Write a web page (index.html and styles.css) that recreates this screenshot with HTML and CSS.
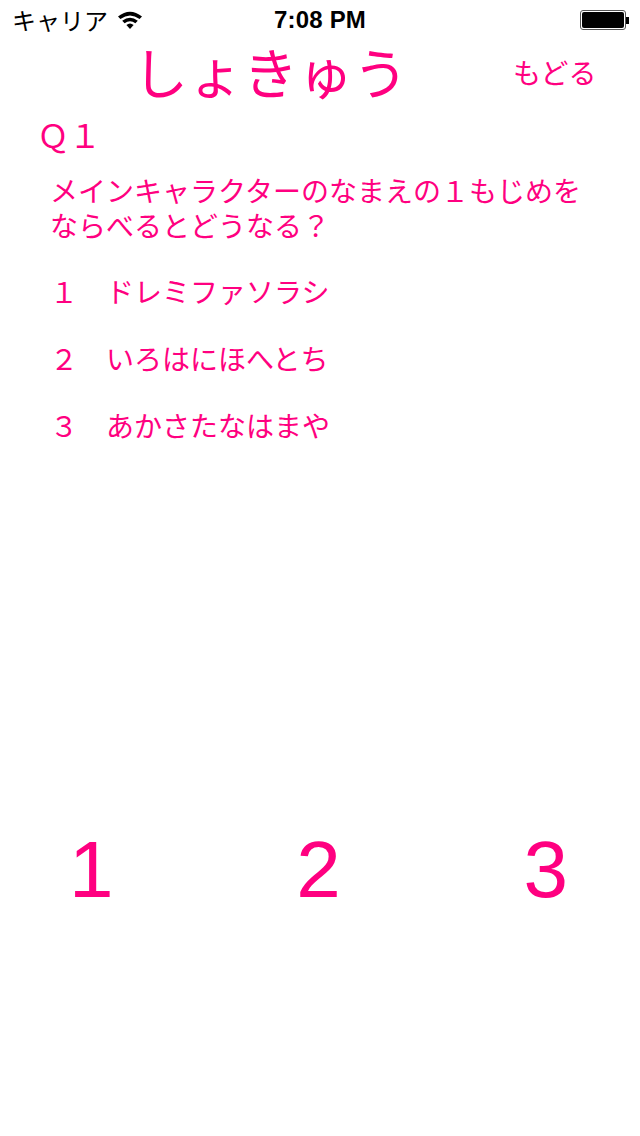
FILE: index.html
```html
<!DOCTYPE html>
<html lang="ja">
<head>
    <meta charset="UTF-8">
    <meta name="viewport" content="width=device-width, initial-scale=1.0">
    <title>しょきゅう</title>
    <link rel="stylesheet" href="styles.css">
</head>
<body>
    <div class="statusbar">
        <div class="status-left">
            <span class="carrier">キャリア</span>
            <svg class="wifi" width="26" height="20" viewBox="0 0 26 20">
                <path d="M1 6.5 Q13 -3 25 6.5 L22.6 9 Q13 2 3.4 9 Z" fill="#000"/>
                <path d="M5.2 10.8 Q13 4.6 20.8 10.8 L18.4 13.2 Q13 9.2 7.6 13.2 Z" fill="#000"/>
                <path d="M9.4 15 Q13 12 16.6 15 L13 19 Z" fill="#000"/>
            </svg>
        </div>
        <div class="clock">7:08 PM</div>
        <div class="battery">
            <div class="battery-body"><div class="battery-fill"></div></div>
            <div class="battery-tip"></div>
        </div>
    </div>

    <div class="header">
        <h1 class="title">しょきゅう</h1>
        <span class="back">もどる</span>
    </div>

    <div class="question-no">Ｑ１</div>
    <p class="question">メインキャラクターのなまえの１もじめを<br>ならべるとどうなる？</p>

    <ul class="choices">
        <li><span class="choice-no">１</span>ドレミファソラシ</li>
        <li><span class="choice-no">２</span>いろはにほへとち</li>
        <li><span class="choice-no">３</span>あかさたなはまや</li>
    </ul>

    <div class="answers">
        <span class="answer">1</span>
        <span class="answer">2</span>
        <span class="answer">3</span>
    </div>
</body>
</html>
```

FILE: styles.css
```css
body {
    margin: 0;
    width: 640px;
    height: 1136px;
    overflow: hidden;
    background-color: #ffffff;
    color: #ff0080;
    font-family: "Noto Sans CJK JP", "Liberation Sans", sans-serif;
    font-weight: 400;
}

.statusbar {
    display: grid;
    grid-template-columns: 1fr auto 1fr;
    align-items: center;
    height: 40px;
    padding: 0 11px 0 12px;
    color: #000000;
}

.status-left {
    display: flex;
    align-items: center;
    gap: 9px;
}

.carrier {
    font-size: 24px;
    line-height: 40px;
}

.clock {
    font-family: "Liberation Sans", sans-serif;
    font-size: 24px;
    font-weight: 700;
    letter-spacing: 0.2px;
    margin-left: -1px;
}

.battery {
    display: flex;
    align-items: center;
    justify-self: end;
}

.battery-body {
    box-sizing: border-box;
    width: 46px;
    height: 20px;
    padding: 1px;
    border: 1px solid #555555;
    border-radius: 3px;
}

.battery-fill {
    height: 100%;
    background-color: #000000;
    border-radius: 2px;
}

.battery-tip {
    width: 3px;
    height: 7px;
    background-color: #000000;
}

.header {
    display: flex;
    align-items: center;
    height: 64px;
    padding-left: 133px;
}

.title {
    margin: 0 0 5px;
    width: 380px;
    font-size: 55px;
    font-weight: 400;
    line-height: 64px;
}

.back {
    font-size: 28px;
}

.question-no {
    margin: 12px 0 0 37px;
    font-size: 32px;
    line-height: 36px;
}

.question {
    margin: 21px 0 0 50px;
    font-size: 28px;
    line-height: 35px;
}

.choices {
    list-style: none;
    margin: 28px 0 0 50px;
    padding: 0;
    font-size: 28px;
}

.choices li {
    display: flex;
    height: 67px;
    line-height: 40px;
}

.choice-no {
    width: 56px;
}

.answers {
    display: flex;
    justify-content: space-between;
    margin-top: 352px;
    padding: 0 72px 0 69px;
    font-family: "Liberation Sans", sans-serif;
    font-size: 80px;
    font-weight: 400;
    line-height: 92px;
}
```
